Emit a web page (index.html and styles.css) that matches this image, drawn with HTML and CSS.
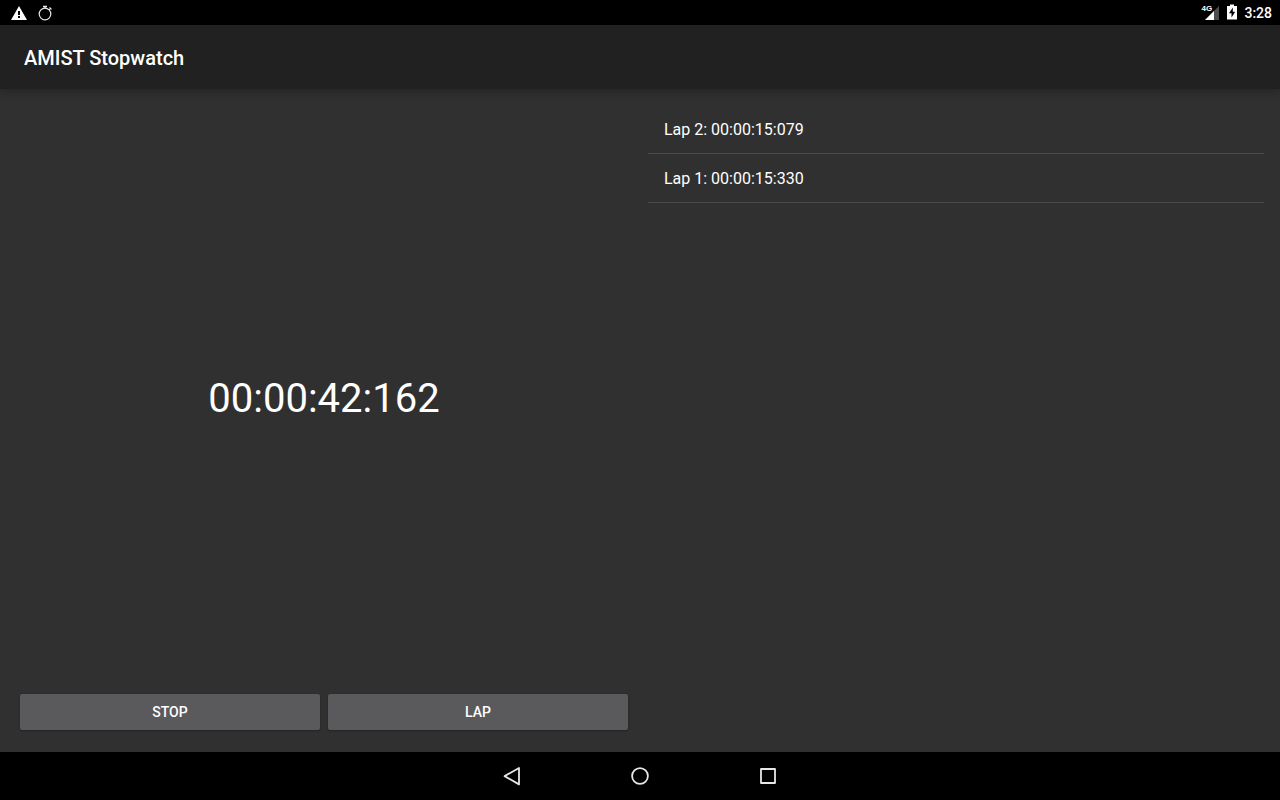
FILE: index.html
```html
<!DOCTYPE html>
<html lang="en">
<head>
<meta charset="utf-8">
<meta name="viewport" content="width=device-width, initial-scale=1">
<title>AMIST Stopwatch</title>
<link rel="stylesheet" href="styles.css">
</head>
<body>
<div class="status-bar">
  <div class="status-group notifications">
    <svg width="16" height="14" viewBox="0 0 16 14" role="img" aria-label="Warning"><path d="M8 0 16 14H0Z" fill="#fff"/><path d="M7 5h2v4H7zM7 10h2v2H7z" fill="#000"/></svg>
    <svg width="14" height="16" viewBox="0 0 14 16" role="img" aria-label="Stopwatch running" fill="none" stroke="#e8e8e8"><circle cx="7" cy="9" r="5.8" stroke-width="1.2"/><path d="M5 1.5h4M7 1.5v2" stroke-width="1.3"/><path d="m11 5 1.6-1.6M11.5 2.3l2 2" stroke-width="1.2"/></svg>
  </div>
  <div class="status-group">
    <div class="signal">
      <span class="network">4G</span>
      <svg width="14" height="14" viewBox="0 0 14 14" role="img" aria-label="Signal"><path d="M14 0v14H0Z" fill="#4d4d4d"/><path d="M9 5v9H0Z" fill="#fff"/></svg>
    </div>
    <svg class="battery" width="10" height="16" viewBox="0 0 10 16" role="img" aria-label="Charging"><path d="M3 0.500h4V2h3v13.500H0V2h3Z" fill="#fff"/><path d="M5.800 3.500 2 9.300h2.500v4.200L8.200 7.700H5.800Z" fill="#000"/></svg>
    <time class="clock">3:28</time>
  </div>
</div>
<header class="app-bar"><h1 class="title">AMIST Stopwatch</h1></header>
<main class="content">
  <section class="timer-pane">
    <div class="timer" role="timer">00:00:42:162</div>
    <div class="actions">
      <button class="action" type="button">STOP</button>
      <button class="action" type="button">LAP</button>
    </div>
  </section>
  <ul class="laps">
    <li class="lap">Lap 2: 00:00:15:079</li>
    <li class="lap">Lap 1: 00:00:15:330</li>
  </ul>
</main>
<nav class="nav-bar" aria-label="System">
  <button class="nav-button" type="button" aria-label="Back"><svg width="24" height="24" viewBox="0 0 24 24"><path d="M19 4v16.400L4.600 12.100Z"/></svg></button>
  <button class="nav-button" type="button" aria-label="Home"><svg width="24" height="24" viewBox="0 0 24 24"><circle cx="12" cy="12" r="7.900"/></svg></button>
  <button class="nav-button" type="button" aria-label="Recent apps"><svg width="24" height="24" viewBox="0 0 24 24"><rect x="5" y="5" width="14" height="14"/></svg></button>
</nav>
</body>
</html>
```

FILE: styles.css
```css
* {
  box-sizing: border-box;
}

body {
  display: flex;
  flex-direction: column;
  min-height: 100vh;
  margin: 0;
  background: #303030;
  color: #fff;
  font-family: Roboto, "Liberation Sans", sans-serif;
}

svg {
  display: block;
}

.status-bar {
  display: flex;
  justify-content: space-between;
  align-items: center;
  height: 25px;
  padding: 0 8px 0 11px;
  background: #000;
}

.status-group {
  display: flex;
  align-items: center;
  gap: 8px;
}

.notifications {
  gap: 11px;
}

.signal {
  position: relative;
  padding-left: 4px;
}

.network {
  position: absolute;
  left: 0;
  top: -1px;
  font-family: "Liberation Sans", sans-serif;
  font-size: 8px;
  font-weight: 700;
  line-height: 8px;
}

.battery {
  margin: -1px -1px 0 0;
}

.clock {
  padding-top: 1px;
  font-size: 14px;
  font-weight: 500;
  line-height: 16px;
}

.app-bar {
  display: flex;
  align-items: center;
  height: 64px;
  padding: 2px 24px 0;
  background: #212121;
  box-shadow: 0 3px 8px rgba(0, 0, 0, 0.25);
}

.title {
  margin: 0;
  font-size: 20px;
  font-weight: 500;
  line-height: 24px;
}

.content {
  display: grid;
  grid-template-columns: 1fr 1fr;
  gap: 16px;
  flex: 1;
  padding: 16px;
}

.timer-pane {
  display: flex;
  flex-direction: column;
}

.timer {
  display: flex;
  flex: 1;
  align-items: center;
  justify-content: center;
  padding-top: 2px;
  font-size: 40px;
  line-height: 48px;
}

.actions {
  display: flex;
  gap: 8px;
  padding: 4px 4px 6px;
}

.action {
  flex: 1;
  height: 36px;
  padding: 0 8px;
  border: 0;
  border-radius: 2px;
  background: #5a5a5c;
  box-shadow: 0 1px 2px rgba(0, 0, 0, 0.3);
  color: #fff;
  font: 500 14px/16px Roboto, "Liberation Sans", sans-serif;
}

.laps {
  margin: 0;
  padding: 0;
  list-style: none;
}

.lap {
  padding: 13px 16px 11px;
  border-bottom: 1px solid #4b4b4b;
  font-size: 16px;
  line-height: 24px;
}

.nav-bar {
  display: flex;
  justify-content: center;
  height: 48px;
  background: #000;
}

.nav-button {
  display: flex;
  align-items: center;
  justify-content: center;
  width: 128px;
  padding: 0;
  border: 0;
  background: none;
}

.nav-button svg {
  fill: none;
  stroke: #e6e6e6;
  stroke-width: 1.8;
  stroke-linejoin: round;
}
```
